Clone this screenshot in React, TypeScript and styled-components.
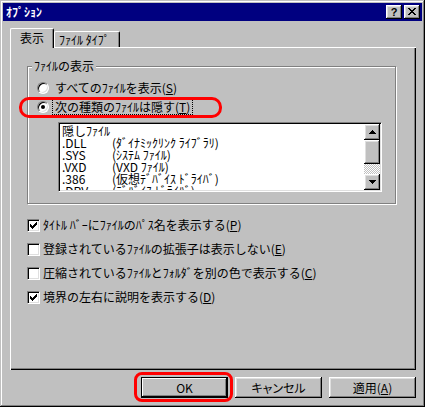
import React from 'react'
import styled, { createGlobalStyle } from 'styled-components'

const FACE = '#c0c0c0'
const SHADOW = '#808080'
const LIGHT = '#dfdfdf'

const GlobalStyle = createGlobalStyle`
  html, body {
    margin: 0;
    padding: 0;
    background: ${FACE};
  }
  body {
    font-family: 'Noto Sans CJK JP', 'Liberation Sans', sans-serif;
    font-size: 12px;
    color: #000;
  }
  * {
    box-sizing: border-box;
  }
`

const Window = styled.div`
  width: 425px;
  height: 407px;
  padding: 3px;
  background: ${FACE};
  box-shadow: inset -1px -1px #000, inset 1px 1px ${FACE}, inset -2px -2px ${SHADOW}, inset 2px 2px #fff;
  display: flex;
  flex-direction: column;
`

const TitleBar = styled.div`
  height: 18px;
  background: #000080;
  display: flex;
  align-items: center;
  padding: 0 2px 0 3px;
  gap: 2px;
`

const TitleText = styled.span`
  flex: 1;
  color: #fff;
  font-weight: bold;
  font-size: 12px;
  line-height: 18px;
`

const BevelBox = styled.div`
  background: ${FACE};
  box-shadow: inset -1px -1px #000, inset 1px 1px #fff, inset -2px -2px ${SHADOW}, inset 2px 2px ${LIGHT};
`

const CaptionButton = styled(BevelBox)`
  width: 16px;
  height: 14px;
  display: flex;
  align-items: center;
  justify-content: center;
  font-family: 'Liberation Sans', sans-serif;
  font-weight: bold;
  font-size: 11px;
  line-height: 14px;
  padding-bottom: 1px;
`

const Body = styled.div`
  flex: 1;
  display: flex;
  flex-direction: column;
  padding: 7px 6px 6px 7px;
`

const TabStrip = styled.div`
  display: flex;
  align-items: flex-end;
  height: 20px;
  margin-bottom: -1px;
  position: relative;
  z-index: 1;
`

const Tab = styled.div<{ $active?: boolean }>`
  height: ${(p) => (p.$active ? '20px' : '16px')};
  width: ${(p) => (p.$active ? '44px' : '66px')};
  margin-bottom: ${(p) => (p.$active ? '0' : '1px')};
  padding: ${(p) => (p.$active ? '2px 0 0 0' : '1px 0 0 4px')};
  text-align: ${(p) => (p.$active ? 'center' : 'left')};
  background: ${FACE};
  border-top: 1px solid #fff;
  border-left: 1px solid #fff;
  border-right: 1px solid #000;
  border-radius: 2px 2px 0 0;
  box-shadow: inset -1px 0 ${SHADOW};
  line-height: 14px;
  white-space: nowrap;
`

const Panel = styled.div`
  height: 323px;
  background: ${FACE};
  box-shadow: inset 1px 1px #fff, inset -1px -1px #000, inset -2px -2px ${SHADOW};
  padding: 19px 0 0 17px;
  display: flex;
  flex-direction: column;
`

const Group = styled.div`
  position: relative;
  width: 369px;
  height: 138px;
  border: 1px solid ${SHADOW};
  box-shadow: inset 1px 1px #fff, 1px 1px #fff;
  padding: 13px 0 0 9px;
  display: flex;
  flex-direction: column;
`

const Legend = styled.span`
  position: absolute;
  top: -9px;
  left: 4px;
  padding: 0 2px;
  background: ${FACE};
  line-height: 16px;
`

const OptionRow = styled.div<{ $gap?: number }>`
  position: relative;
  display: flex;
  align-items: center;
  height: 16px;
  gap: ${(p) => p.$gap ?? 4}px;
`

const RadioCircle = styled.span<{ $checked?: boolean }>`
  width: 12px;
  height: 12px;
  border-radius: 50%;
  background: #fff;
  border: 1px solid;
  border-color: ${SHADOW} #fff #fff ${SHADOW};
  box-shadow: inset 1px 1px #000, inset -1px -1px ${LIGHT};
  display: flex;
  align-items: center;
  justify-content: center;
  &::after {
    content: '';
    width: 4px;
    height: 4px;
    border-radius: 50%;
    background: ${(p) => (p.$checked ? '#000' : 'transparent')};
  }
`

const Label = styled.span<{ $focus?: boolean }>`
  padding: 0 2px;
  line-height: 14px;
  outline: ${(p) => (p.$focus ? '1px dotted #000' : 'none')};
  white-space: nowrap;
`

const Key = styled.u`
  text-underline-offset: 1px;
`

const Marker = styled.span<{ $w: number; $h: number; $l: number; $t: number; $r: number }>`
  position: absolute;
  left: ${(p) => p.$l}px;
  top: ${(p) => p.$t}px;
  width: ${(p) => p.$w}px;
  height: ${(p) => p.$h}px;
  border: 3px solid #ff0000;
  border-radius: ${(p) => p.$r}px;
  pointer-events: none;
`

const ListBox = styled.div`
  margin: 7px 0 0 21px;
  width: 324px;
  height: 70px;
  background: #fff;
  border: 1px solid;
  border-color: ${SHADOW} #fff #fff ${SHADOW};
  box-shadow: inset 1px 1px #000, inset -1px -1px ${LIGHT};
  padding: 1px;
  display: flex;
`

const ListItems = styled.div`
  flex: 1;
  overflow: hidden;
  padding: 1px 0 0 2px;
`

const ListRow = styled.div`
  display: flex;
  height: 12px;
  line-height: 12px;
  white-space: nowrap;
`

const ExtCol = styled.span`
  width: 50px;
`

const ScrollBar = styled.div`
  width: 16px;
  display: flex;
  flex-direction: column;
`

const ArrowButton = styled(BevelBox)`
  width: 16px;
  height: 16px;
  display: flex;
  align-items: center;
  justify-content: center;
`

const Thumb = styled(BevelBox)`
  width: 16px;
  height: 24px;
`

const Track = styled.div`
  flex: 1;
  background: repeating-conic-gradient(${FACE} 0 25%, #fff 0 50%) 0 0 / 2px 2px;
`

const CheckList = styled.div`
  margin-top: 13px;
  display: flex;
  flex-direction: column;
  gap: 8px;
`

const CheckBox = styled.span`
  width: 13px;
  height: 13px;
  background: #fff;
  border: 1px solid;
  border-color: ${SHADOW} #fff #fff ${SHADOW};
  box-shadow: inset 1px 1px #000, inset -1px -1px ${LIGHT};
  display: flex;
  align-items: center;
  justify-content: center;
`

const ButtonRow = styled.div`
  margin-top: 7px;
  height: 21px;
  display: flex;
  justify-content: flex-end;
  gap: 7px;
`

const PushButton = styled(BevelBox)<{ $default?: boolean }>`
  position: relative;
  width: 87px;
  height: 21px;
  display: flex;
  align-items: center;
  justify-content: center;
  line-height: 14px;
  font-feature-settings: 'palt';
  ${(p) =>
    p.$default
      ? `box-shadow: inset 0 0 0 1px #000, inset -2px -2px #000, inset 2px 2px #fff, inset -3px -3px ${SHADOW};`
      : ''}
`

const Arrow = ({ up }: { up?: boolean }) => (
  <svg width="7" height="4" viewBox="0 0 7 4" shapeRendering="crispEdges">
    <path d={up ? 'M3 0h1v1h1v1h1v1h1v1H0V3h1V2h1V1h1z' : 'M0 0h7v1H6v1H5v1H4v1H3V3H2V2H1V1H0z'} fill="#000" />
  </svg>
)

const Check = () => (
  <svg width="7" height="7" viewBox="0 0 7 7" shapeRendering="crispEdges">
    <path d="M6 0h1v3H6v1H5v1H4v1H3v1H2V6H1V5H0V2h1v1h1v1h1V3h1V2h1V1h1z" fill="#000" />
  </svg>
)

const CloseGlyph = () => (
  <svg width="8" height="7" viewBox="0 0 8 7" shapeRendering="crispEdges">
    <path
      d="M0 0h2v1h1v1h2V1h1V0h2v1H7v1H6v1H5v1h1v1h1v1h1v1H6V6H5V5H3v1H2v1H0V6h1V5h1V4h1V3H2V2H1V1H0z"
      fill="#000"
    />
  </svg>
)

const files = [
  ['隠しﾌｧｲﾙ', ''],
  ['.DLL', '(ﾀﾞｲﾅﾐｯｸﾘﾝｸ ﾗｲﾌﾞﾗﾘ)'],
  ['.SYS', '(ｼｽﾃﾑ ﾌｧｲﾙ)'],
  ['.VXD', '(VXD ﾌｧｲﾙ)'],
  ['.386', '(仮想ﾃﾞﾊﾞｲｽ ﾄﾞﾗｲﾊﾞ)'],
  ['.DRV', '(ﾃﾞﾊﾞｲｽ ﾄﾞﾗｲﾊﾞ)'],
]

const checks: { text: string; key: string; checked: boolean }[] = [
  { text: 'ﾀｲﾄﾙ ﾊﾞｰにﾌｧｲﾙのﾊﾟｽ名を表示する', key: 'P', checked: true },
  { text: '登録されているﾌｧｲﾙの拡張子は表示しない', key: 'E', checked: false },
  { text: '圧縮されているﾌｧｲﾙとﾌｫﾙﾀﾞを別の色で表示する', key: 'C', checked: false },
  { text: '境界の左右に説明を表示する', key: 'D', checked: true },
]

export default function App() {
  return (
    <>
      <GlobalStyle />
      <Window>
        <TitleBar>
          <TitleText>ｵﾌﾟｼｮﾝ</TitleText>
          <CaptionButton>?</CaptionButton>
          <CaptionButton>
            <CloseGlyph />
          </CaptionButton>
        </TitleBar>
        <Body>
          <TabStrip>
            <Tab $active>表示</Tab>
            <Tab>ﾌｧｲﾙ ﾀｲﾌﾟ</Tab>
          </TabStrip>
          <Panel>
            <Group>
              <Legend>ﾌｧｲﾙの表示</Legend>
              <OptionRow>
                <RadioCircle />
                <Label>
                  すべてのﾌｧｲﾙを表示(<Key>S</Key>)
                </Label>
              </OptionRow>
              <OptionRow style={{ marginTop: 3 }}>
                <RadioCircle $checked />
                <Label $focus>
                  次の種類のﾌｧｲﾙは隠す(<Key>T</Key>)
                </Label>
                <Marker $l={-18} $t={-2} $w={203} $h={21} $r={10} />
              </OptionRow>
              <ListBox>
                <ListItems>
                  {files.map(([ext, desc]) => (
                    <ListRow key={ext}>
                      {desc ? <ExtCol>{ext}</ExtCol> : ext}
                      {desc}
                    </ListRow>
                  ))}
                </ListItems>
                <ScrollBar>
                  <ArrowButton>
                    <Arrow up />
                  </ArrowButton>
                  <Thumb />
                  <Track />
                  <ArrowButton>
                    <Arrow />
                  </ArrowButton>
                </ScrollBar>
              </ListBox>
            </Group>
            <CheckList>
              {checks.map((c) => (
                <OptionRow key={c.key} $gap={1}>
                  <CheckBox>{c.checked && <Check />}</CheckBox>
                  <Label>
                    {c.text}(<Key>{c.key}</Key>)
                  </Label>
                </OptionRow>
              ))}
            </CheckList>
          </Panel>
          <ButtonRow>
            <PushButton $default>
              OK
              <Marker $l={-7} $t={-5} $w={99} $h={30} $r={8} />
            </PushButton>
            <PushButton>キャンセル</PushButton>
            <PushButton>
              適用(<Key>A</Key>)
            </PushButton>
          </ButtonRow>
        </Body>
      </Window>
    </>
  )
}
